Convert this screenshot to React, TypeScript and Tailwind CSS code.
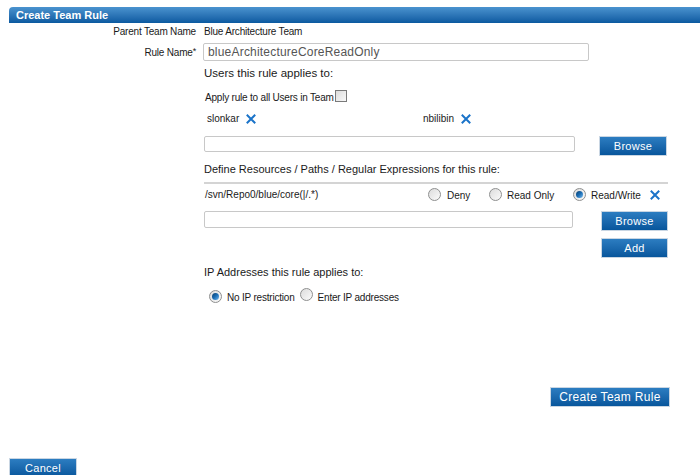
import React from "react";

const X = () => (
  <svg width="10" height="10" viewBox="0 0 10 10" className="inline-block">
    <path d="M1.5 1.5 L8.5 8.5 M8.5 1.5 L1.5 8.5" stroke="#1a73c9" strokeWidth="2" strokeLinecap="square" />
  </svg>
);

const Radio = ({ checked }: { checked?: boolean }) => (
  <span className="inline-flex w-[13px] h-[13px] rounded-full border border-[#8e8f8f] bg-gradient-to-br from-[#dcdcdc] to-[#fbfbfb] items-center justify-center shrink-0">
    {checked && <span className="w-[7px] h-[7px] rounded-full bg-gradient-to-br from-[#0a3f6e] via-[#1b6eb5] to-[#6fb9ee]" />}
  </span>
);

const Btn = ({ children, w }: { children: React.ReactNode; w: string }) => (
  <div className={`${w} h-[20px] bg-gradient-to-b from-[#2c7dc1] to-[#07569c] border border-[#c9d6e3] text-white text-[11px] flex items-center justify-center tracking-[0.3px]`}>
    {children}
  </div>
);

export default function App() {
  return (
    <div className="w-[700px] h-[475px] bg-white overflow-hidden relative text-[#1a1a1a]" style={{ fontFamily: '"Liberation Sans", Tahoma, sans-serif' }}>
      <div className="ml-[9px] mt-[7px] h-[16px] rounded-tl-[4px] bg-gradient-to-b from-[#4a93cf] to-[#0a5aa0] text-white font-bold text-[11px] flex items-center pl-[7px]">
        Create Team Rule
      </div>
      <div className="flex h-[17px] items-center text-[10px] tracking-[-0.2px]">
        <div className="w-[196px] text-right">Parent Team Name</div>
        <div className="ml-[8px]">Blue Architecture Team</div>
      </div>
      <div className="flex items-center mt-[3px] text-[10px] tracking-[-0.2px]">
        <div className="w-[196px] text-right self-start mt-[2px]">Rule Name<span className="align-top text-[9px]">*</span></div>
        <div className="ml-[7px] w-[386px] h-[18px] border border-[#c8c8c8] rounded-[2px] text-[12px] text-[#555] flex items-center pl-[4px] tracking-[0.2px]">
          blueArchitectureCoreReadOnly
        </div>
      </div>
      <div className="ml-[204px]">
        <div className="mt-[5px] text-[11.5px] h-[14px] leading-[14px]">Users this rule applies to:</div>
        <div className="mt-[9px] flex items-center text-[10px] h-[13px] tracking-[-0.2px]">
          <span className="ml-[1px] mt-[4px]">Apply rule to all Users in Team</span>
          <span className="w-[12px] h-[12px] border border-[#7a7a7a] bg-gradient-to-br from-[#dcdcdc] to-[#f8f8f8] ml-[1px]" />
        </div>
        <div className="mt-[10px] flex items-center text-[10px] h-[12px]">
          <div className="w-[219px] flex items-center pl-[3px]">
            <span>slonkar</span>
            <span className="ml-[7px]"><X /></span>
          </div>
          <div className="flex items-center">
            <span>nbilibin</span>
            <span className="ml-[7px]"><X /></span>
          </div>
        </div>
        <div className="mt-[12px] flex items-start">
          <div className="w-[371px] h-[16px] border border-[#c8c8c8] rounded-[2px]" />
          <div className="ml-[24px]"><Btn w="w-[68px]">Browse</Btn></div>
        </div>
        <div className="mt-[6px] text-[11px] h-[14px] leading-[14px]">Define Resources / Paths / Regular Expressions for this rule:</div>
        <div className="mt-[6px] w-[464px] h-[2px] bg-[#d4d4d4]" />
        <div className="mt-[3px] flex items-center text-[10px] h-[14px] w-[464px]">
          <span className="ml-[1px] w-[223px]">/svn/Repo0/blue/core(|/.*)</span>
          <Radio />
          <span className="ml-[6px] mt-[3px] w-[42px]">Deny</span>
          <Radio />
          <span className="ml-[5px] mt-[3px] w-[66px]">Read Only</span>
          <Radio checked />
          <span className="ml-[5px] mt-[3px]">Read/Write</span>
          <span className="ml-[9px]"><X /></span>
        </div>
        <div className="mt-[10px] flex items-start">
          <div className="w-[369px] h-[17px] border border-[#c8c8c8] rounded-[2px]" />
          <div className="ml-[28px]"><Btn w="w-[67px]">Browse</Btn></div>
        </div>
        <div className="ml-[397px] mt-[7px]"><Btn w="w-[67px]">Add</Btn></div>
        <div className="mt-[7px] text-[11px] h-[14px] leading-[14px]">IP Addresses this rule applies to:</div>
        <div className="mt-[10px] flex items-center text-[10px] h-[14px] pl-[5px] tracking-[-0.2px]">
          <Radio checked />
          <span className="ml-[5px] mt-[2px]">No IP restriction</span>
          <span className="ml-[5px]"><Radio /></span>
          <span className="ml-[5px] mt-[2px]">Enter IP addresses</span>
        </div>
      </div>
      <div className="ml-[550px] mt-[84px]"><Btn w="w-[120px]"><span className="text-[12px]">Create Team Rule</span></Btn></div>
      <div className="ml-[9px] mt-[51px]"><Btn w="w-[68px]"><span className="text-[11px]">Cancel</span></Btn></div>
    </div>
  );
}
